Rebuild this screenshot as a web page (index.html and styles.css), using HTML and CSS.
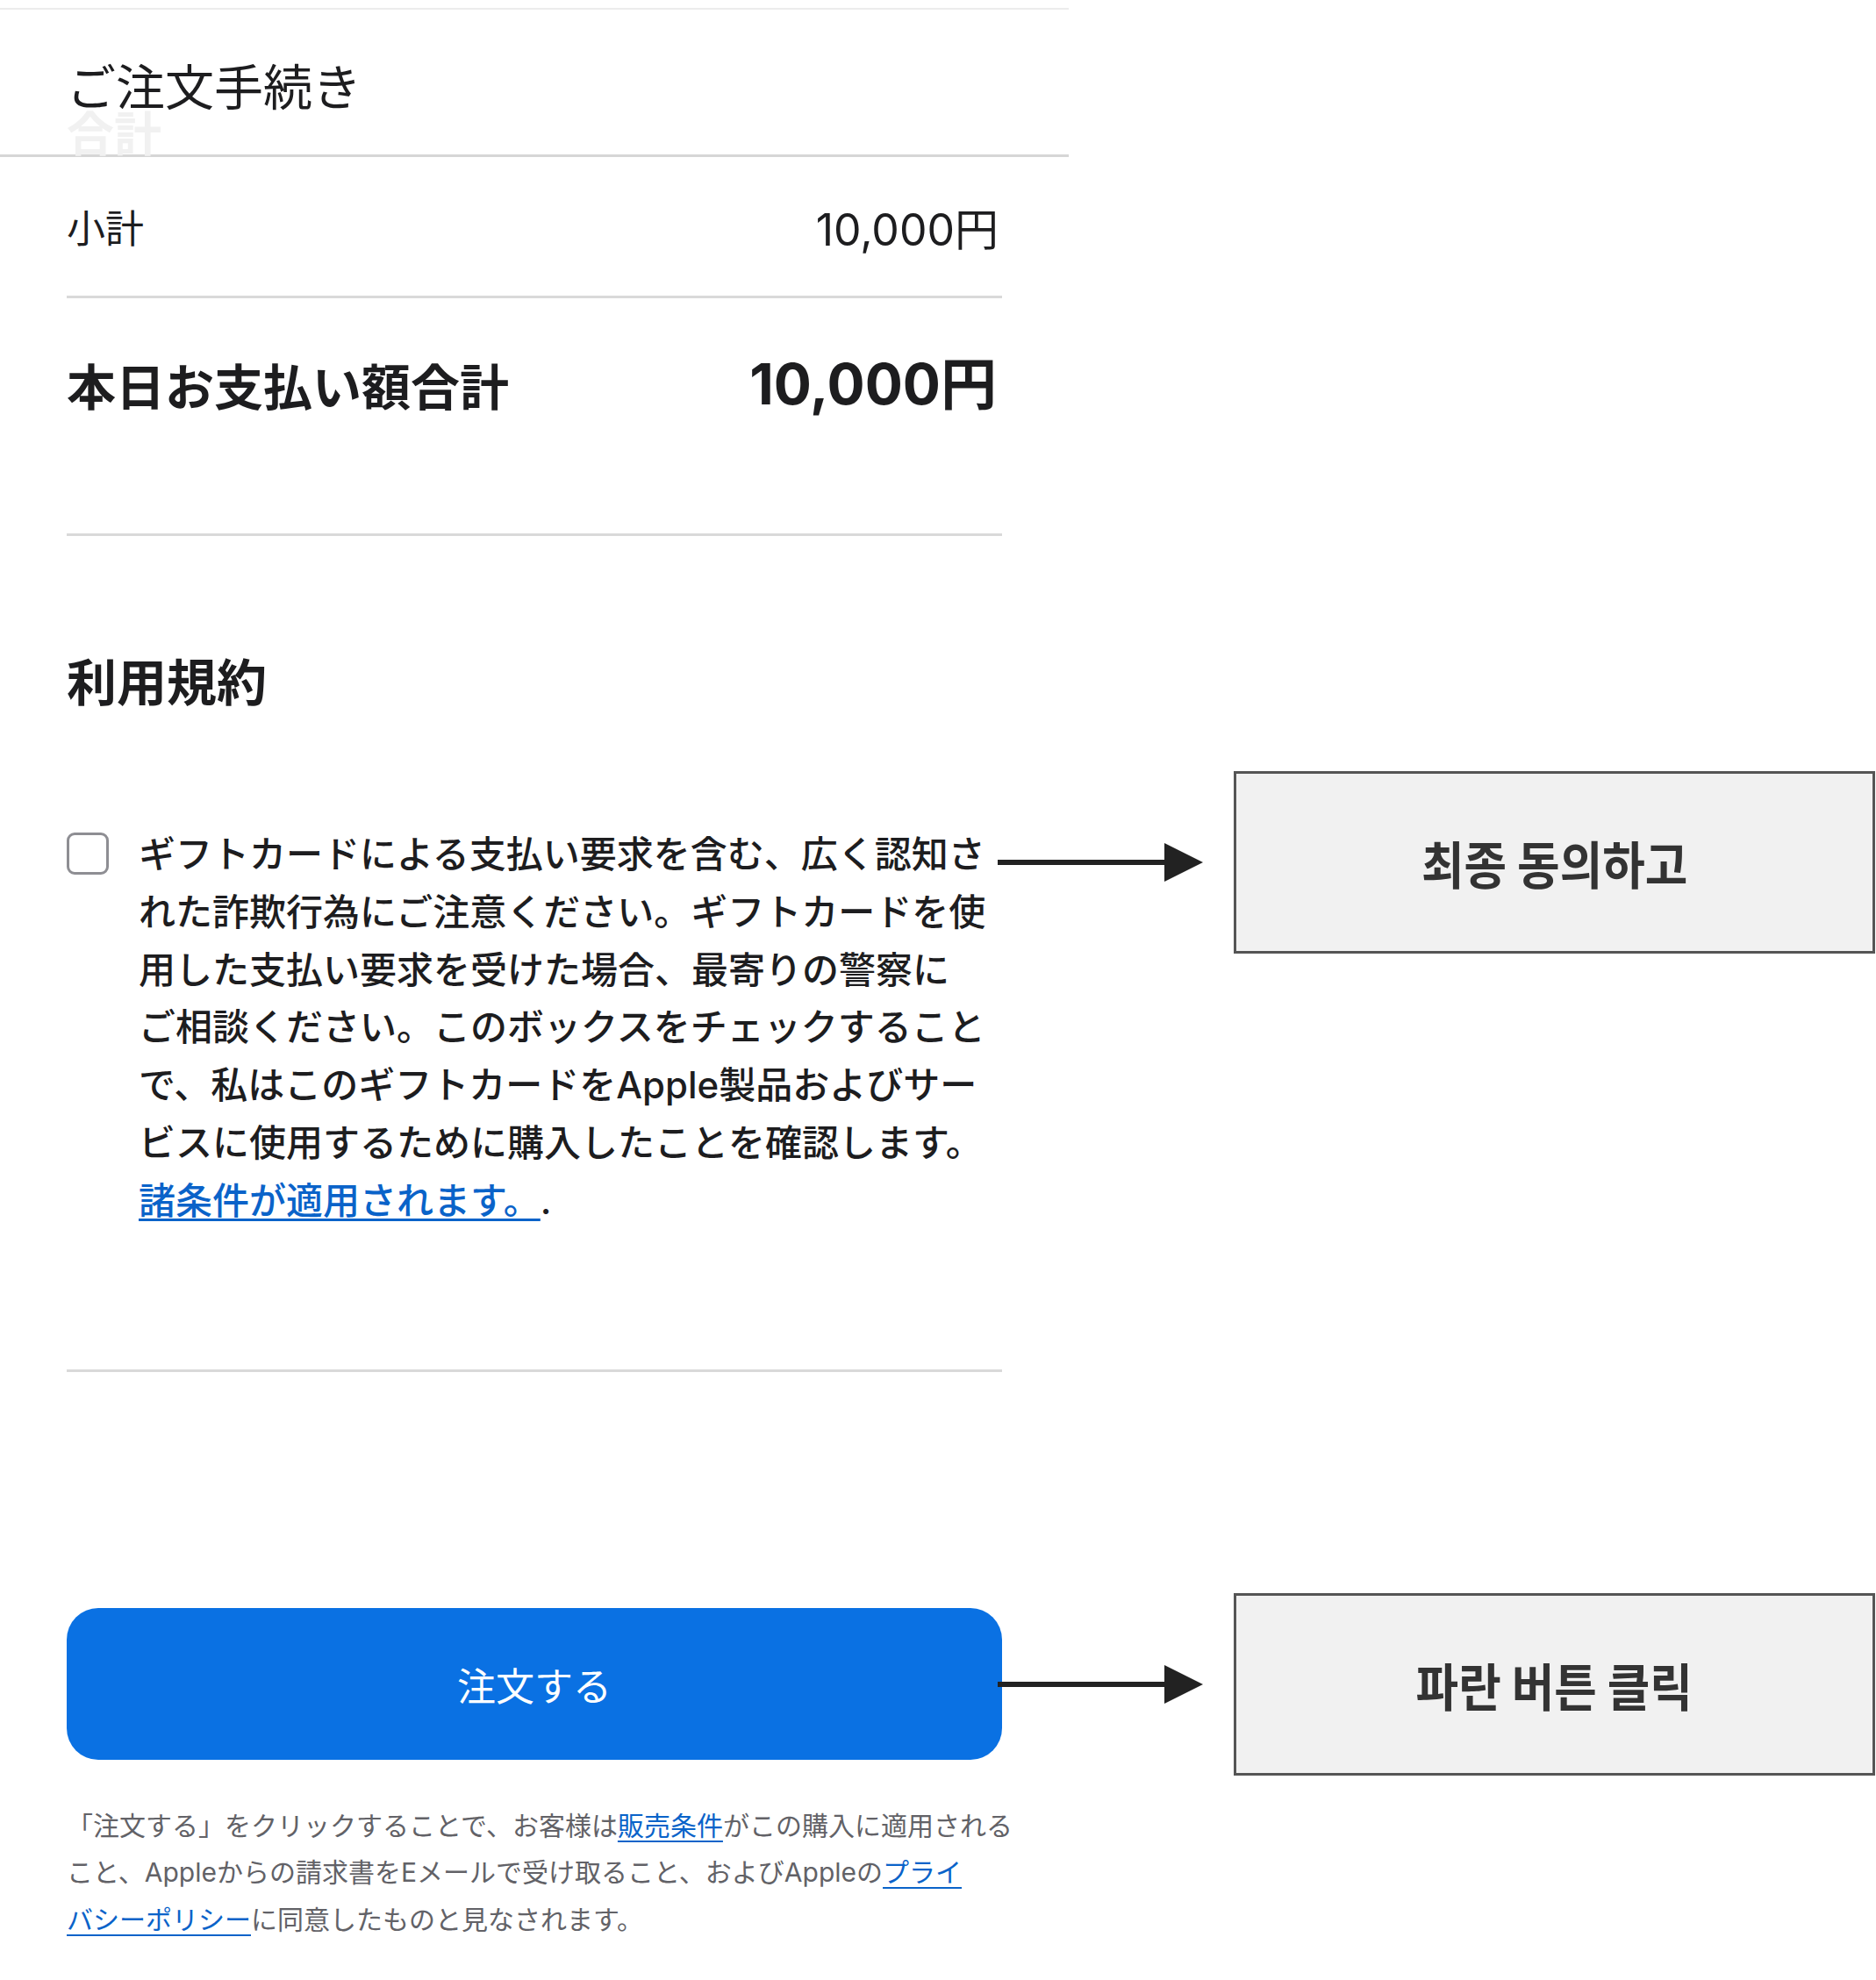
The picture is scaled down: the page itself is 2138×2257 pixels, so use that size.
FILE: index.html
```html
<!DOCTYPE html>
<html lang="ja">
<head>
    <meta charset="UTF-8">
    <meta name="viewport" content="width=device-width, initial-scale=1.0">
    <title>ご注文手続き</title>
    <link rel="stylesheet" href="styles.css">
</head>
<body>
    <div class="checkout-head">
        <h1>ご注文手続き</h1>
        <div class="ghost">合計</div>
    </div>

    <div class="content">
        <div class="summary-row">
            <span class="label">小計</span>
            <span class="amount">10,000円</span>
        </div>
        <div class="summary-row total">
            <span class="label">本日お支払い額合計</span>
            <span class="amount">10,000円</span>
        </div>

        <div class="terms">
            <h2>利用規約</h2>
            <div class="terms-row">
                <span class="checkbox"></span>
                <p class="terms-text">ギフトカードによる支払い要求を含む、広く認知さ<br>れた詐欺行為にご注意ください。ギフトカードを使<br>用した支払い要求を受けた場合、最寄りの警察に<br>ご相談ください。このボックスをチェックすること<br>で、私はこのギフトカードをApple製品およびサー<br>ビスに使用するために購入したことを確認します。<br><a href="#">諸条件が適用されます。</a>.</p>
                <div class="callout terms-callout">
                    <svg class="arrow" width="234" height="48" viewBox="0 0 234 48">
                        <line x1="0" y1="24" x2="194" y2="24" stroke="#222" stroke-width="6"/>
                        <polygon points="190,2 234,24 190,46" fill="#222"/>
                    </svg>
                    <div class="note"><span>최종 동의하고</span></div>
                </div>
            </div>
        </div>

        <div class="order-row">
            <button class="order-btn">注文する</button>
            <div class="callout">
                <svg class="arrow" width="234" height="48" viewBox="0 0 234 48">
                    <line x1="0" y1="24" x2="194" y2="24" stroke="#222" stroke-width="6"/>
                    <polygon points="190,2 234,24 190,46" fill="#222"/>
                </svg>
                <div class="note"><span>파란 버튼 클릭</span></div>
            </div>
        </div>

        <p class="legal">「注文する」をクリックすることで、お客様は<a href="#">販売条件</a>がこの購入に適用される<br>こと、Appleからの請求書をEメールで受け取ること、およびAppleの<a href="#">プライ<br>バシーポリシー</a>に同意したものと見なされます。</p>
    </div>
</body>
</html>
```

FILE: styles.css
```css
* {
    margin: 0;
    padding: 0;
    box-sizing: border-box;
}

body {
    font-family: Inter, 'Noto Sans CJK JP', sans-serif;
    background: #fff;
    color: #1d1d1f;
    width: 2138px;
}

a {
    color: #0a63c9;
    text-decoration: underline;
    text-decoration-thickness: 3px;
    text-underline-offset: 5px;
}

.checkout-head {
    width: 1218px;
    margin-top: 9px;
    border-top: 2px solid #ececec;
    border-bottom: 3px solid #d6d6d6;
    padding: 55px 0 0 76px;
}

.checkout-head h1 {
    font-family: 'Noto Sans CJK JP', sans-serif;
    font-size: 56px;
    font-weight: 400;
    line-height: 60px;
}

.ghost {
    font-family: 'Noto Sans CJK JP', sans-serif;
    font-size: 54px;
    font-weight: 700;
    line-height: 52px;
    margin-top: -2px;
    color: #f1f1f1;
}

.content {
    padding-left: 76px;
}

.summary-row {
    width: 1066px;
    height: 161px;
    display: flex;
    justify-content: space-between;
    align-items: center;
    border-bottom: 3px solid #d9d9d9;
}

.summary-row .label {
    font-family: 'Noto Sans CJK JP', sans-serif;
    font-size: 44px;
}

.summary-row .amount {
    font-size: 50px;
    padding-right: 4px;
}

.summary-row.total {
    height: 271px;
    align-items: flex-start;
    padding-top: 62px;
}

.summary-row.total .label {
    font-size: 56px;
    font-weight: 700;
    line-height: 72px;
}

.summary-row.total .amount {
    font-size: 64px;
    font-weight: 700;
    line-height: 72px;
    padding-right: 6px;
}

.terms {
    width: 1066px;
    padding: 128px 0 159px;
    border-bottom: 3px solid #d9d9d9;
}

.terms h2 {
    font-family: 'Noto Sans CJK JP', sans-serif;
    font-size: 57px;
    font-weight: 700;
    line-height: 70px;
}

.terms-row {
    display: flex;
    align-items: flex-start;
    margin-top: 132px;
}

.checkbox {
    flex: none;
    width: 48px;
    height: 48px;
    margin-top: 8px;
    border: 3px solid #8e8e93;
    border-radius: 9px;
}

.terms-text {
    flex: none;
    width: 984px;
    margin-left: 34px;
    font-size: 42px;
    font-weight: 500;
    line-height: 65.8px;
    white-space: nowrap;
}

.callout {
    flex: none;
    display: flex;
    align-items: center;
    gap: 35px;
    margin-left: -5px;
}

.terms-callout {
    margin-top: -62px;
}

.arrow {
    display: block;
}

.note {
    width: 731px;
    height: 208px;
    display: flex;
    align-items: center;
    justify-content: center;
    background: #f1f1f1;
    border: 3px solid #555;
}

.note span {
    display: inline-block;
    font-family: 'Noto Sans CJK KR', sans-serif;
    font-size: 58px;
    font-weight: 700;
    color: #333;
    transform: scaleX(0.91);
}

.order-row {
    display: flex;
    align-items: center;
    margin-top: 252px;
}

.order-btn {
    flex: none;
    width: 1066px;
    height: 173px;
    border: none;
    border-radius: 36px;
    background: #0a71e3;
    color: #fff;
    font-family: 'Noto Sans CJK JP', sans-serif;
    font-size: 44px;
}

.legal {
    margin-top: 31px;
    font-size: 30px;
    line-height: 53.5px;
    color: #626267;
    white-space: nowrap;
}

.legal a {
    text-decoration-thickness: 2px;
    text-underline-offset: 6px;
}
```
